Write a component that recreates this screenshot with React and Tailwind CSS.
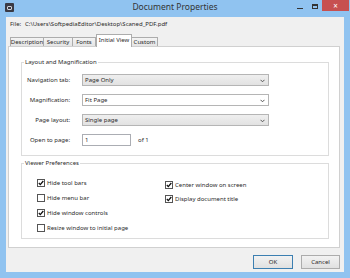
import React from "react";

const F = { fontFamily: '"Noto Sans", "Open Sans", sans-serif' };

function Chevron() {
  return (
    <svg width="5" height="4" viewBox="0 0 5 4" className="absolute right-[3px] top-[4px]">
      <path d="M0.5 0.8 L2.5 2.8 L4.5 0.8" fill="none" stroke="#555" strokeWidth="1" />
    </svg>
  );
}

function Select({ text, white }) {
  return (
    <div
      className={`relative w-[187px] h-[12px] border border-[#b5b5b5] flex items-center pl-[2px] text-[6px] text-[#2a2a2a] ${
        white ? "bg-white" : "bg-gradient-to-b from-[#efefef] to-[#e2e2e2]"
      }`}
    >
      {text}
      <Chevron />
    </div>
  );
}

function Check({ checked, label }) {
  return (
    <div className="flex items-center gap-[2px] h-[10px] text-[6px] text-[#2a2a2a]">
      <div className="w-[8px] h-[8px] border border-[#555] bg-white flex items-center justify-center">
        {checked && (
          <svg width="6" height="6" viewBox="0 0 6 6">
            <path d="M0.8 3 L2.3 4.6 L5.3 1" fill="none" stroke="#111" strokeWidth="1.3" />
          </svg>
        )}
      </div>
      <span>{label}</span>
    </div>
  );
}

export default function App() {
  return (
    <div style={F} className="w-[350px] h-[278px] bg-[#90c3f0] flex flex-col overflow-hidden">
      {/* Title bar */}
      <div className="h-[17px] relative flex items-start shrink-0">
        <div className="ml-[5px] mt-[3px] w-[9px] h-[9px] bg-[#3a3a44] rounded-[1px] flex items-center justify-center">
          <div className="w-[5px] h-[4px] border border-[#cfd3da] rounded-[1px]" />
        </div>
        <div className="absolute left-0 right-0 top-[1px] text-center text-[8.5px] text-[#333]">Document Properties</div>
        <div className="ml-auto flex items-start">
          <div className="w-[6px] h-[1px] bg-[#333] mt-[8px] mr-[9px]" />
          <div className="w-[6px] h-[5px] border border-[#333] border-t-2 mt-[4px] mr-[4px]" />
          <div className="w-[27px] h-[11px] bg-[#c75050] flex items-center justify-center text-white text-[8px] leading-none mr-[1px]">
            ×
          </div>
        </div>
      </div>

      {/* Body */}
      <div className="flex-1 mx-[6px] mb-[6px] bg-[#f0f0f0] flex flex-col">
        <div className="h-[12px] mt-[1px] pl-[4px] flex items-center text-[6px] text-[#2a2a2a]">
          <span className="w-[15px]">File:</span>
          <span>C:\Users\SoftpediaEditor\Desktop\Scaned_PDF.pdf</span>
        </div>

        {/* Tabs */}
        <div className="mt-[3px] ml-[4px] flex items-end h-[13px] text-[6px] text-[#2a2a2a]">
          <div className="w-[34px] h-[9px] border border-b-0 border-[#acacac] bg-gradient-to-b from-[#f3f3f3] to-[#e5e5e5] flex items-center justify-center">Description</div>
          <div className="w-[29px] h-[9px] border border-l-0 border-b-0 border-[#acacac] bg-gradient-to-b from-[#f3f3f3] to-[#e5e5e5] flex items-center justify-center">Security</div>
          <div className="w-[23px] h-[9px] border border-l-0 border-b-0 border-[#acacac] bg-gradient-to-b from-[#f3f3f3] to-[#e5e5e5] flex items-center justify-center">Fonts</div>
          <div className="w-[36px] h-[13px] border border-b-0 border-[#acacac] bg-white flex items-start pt-[1px] justify-center relative z-10 -mb-[1px]">Initial View</div>
          <div className="w-[26px] h-[9px] border border-l-0 border-b-0 border-[#acacac] bg-gradient-to-b from-[#f3f3f3] to-[#e5e5e5] flex items-center justify-center">Custom</div>
        </div>

        {/* Panel */}
        <div className="ml-[2px] mr-[4px] h-[202px] border border-[#d0d0d0] bg-white pt-[15px] pl-[12px] pr-[10px] flex flex-col">
          {/* Group 1 */}
          <div className="relative h-[94px] border border-[#dcdcdc] pt-[11px]">
            <div className="absolute -top-[5px] left-[2px] bg-white px-[1px] text-[6px] text-[#2a2a2a] leading-[9px]">Layout and Magnification</div>
            <div className="flex flex-col gap-[8px] text-[6px] text-[#2a2a2a]">
              <div className="flex items-center">
                <div className="w-[48px] text-right">Navigation tab:</div>
                <div className="ml-[12px]"><Select text="Page Only" /></div>
              </div>
              <div className="flex items-center">
                <div className="w-[48px] text-right">Magnification:</div>
                <div className="ml-[12px]"><Select text="Fit Page" white /></div>
              </div>
              <div className="flex items-center">
                <div className="w-[48px] text-right">Page layout:</div>
                <div className="ml-[12px]"><Select text="Single page" /></div>
              </div>
              <div className="flex items-center">
                <div className="w-[48px] text-right">Open to page:</div>
                <div className="ml-[12px] w-[49px] h-[12px] border border-[#abadb3] bg-white flex items-center pl-[2px]">1</div>
                <div className="ml-[7px]">of 1</div>
              </div>
            </div>
          </div>

          {/* Group 2 */}
          <div className="relative mt-[7px] h-[76px] border border-[#dcdcdc] pt-[14px] pl-[15px] flex">
            <div className="absolute -top-[5px] left-[2px] bg-white px-[1px] text-[6px] text-[#2a2a2a] leading-[9px]">Viewer Preferences</div>
            <div className="flex flex-col gap-[5px] w-[128px]">
              <Check checked label="Hide tool bars" />
              <Check label="Hide menu bar" />
              <Check checked label="Hide window controls" />
              <Check label="Resize window to initial page" />
            </div>
            <div className="flex flex-col gap-[4px] mt-[2px]">
              <Check checked label="Center window on screen" />
              <Check checked label="Display document title" />
            </div>
          </div>
        </div>

        {/* Buttons */}
        <div className="flex justify-end mt-[7px] mr-[4px] gap-[8px] text-[6px] text-[#2a2a2a]">
          <div className="w-[40px] h-[14px] border border-[#3c7fb1] bg-gradient-to-b from-[#f2f2f2] to-[#e0e0e0] flex items-center justify-center">OK</div>
          <div className="w-[39px] h-[14px] border border-[#acacac] bg-gradient-to-b from-[#f2f2f2] to-[#e0e0e0] flex items-center justify-center">Cancel</div>
        </div>
      </div>
    </div>
  );
}
